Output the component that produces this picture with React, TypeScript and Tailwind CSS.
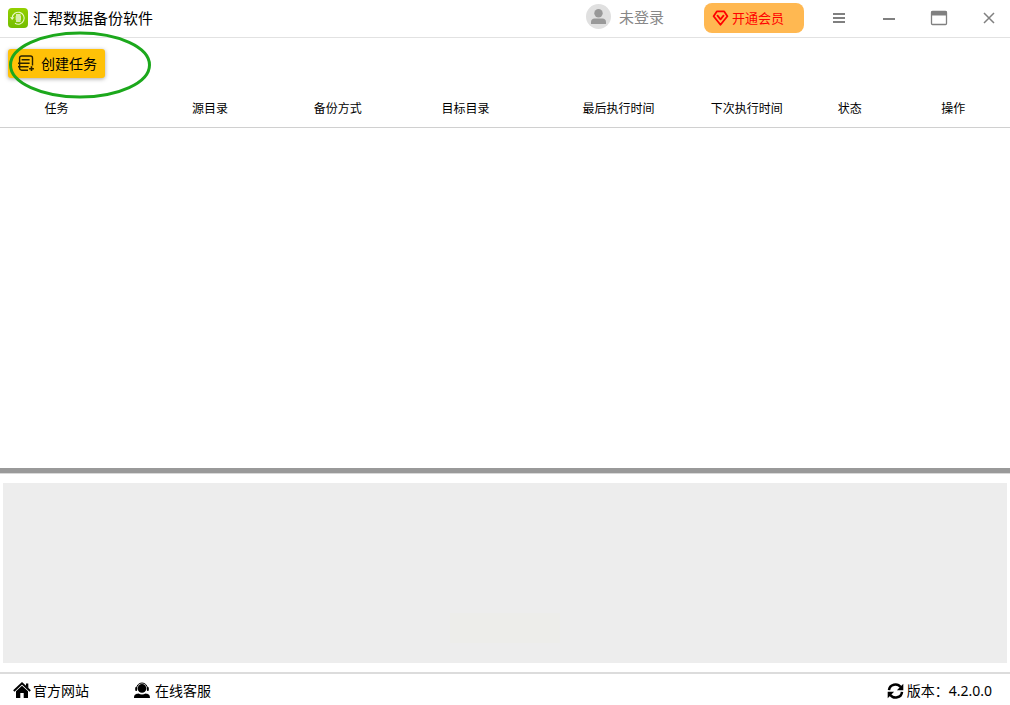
import type { ReactNode } from "react";

const columns = [
    {name: "任务", className: "w-[12%] pr-2"},
    {name: "源目录", className: "w-[17.6%]"},
    {name: "备份方式", className: "w-[7.7%]"},
    {name: "目标目录", className: "w-[17.6%]"},
    {name: "最后执行时间", className: "w-[12.7%]"},
    {name: "下次执行时间", className: "w-[12.7%]"},
    {name: "状态", className: "w-[7.7%]"},
    {name: "操作", className: "w-[12%] pl-2"},
];

function Logo() {
    return (
        <svg width="20" height="20" viewBox="0 0 20 20" fill="none" aria-hidden="true">
            <defs>
                <linearGradient id="logo" x1="0" y1="0" x2="0" y2="1">
                    <stop offset="0" stopColor="#93d000" />
                    <stop offset="1" stopColor="#72bd00" />
                </linearGradient>
            </defs>
            <rect width="20" height="20" rx="4" fill="url(#logo)" />
            <path d="M4.2 9.5A6 6 0 1 1 7 15.300" stroke="#e9f8c8" strokeWidth="1.1" />
            <path d="M2 9.300h4.400l-2.200 2.600z" fill="#e9f8c8" />
            <path d="M8 7h4.600M7.600 9h5.400M7.600 11h5.400M8 13h4.600" stroke="#f4fbe2" strokeWidth="1.300" />
        </svg>
    );
}

function AvatarIcon() {
    return (
        <svg width="26" height="26" viewBox="0 0 26 26" aria-hidden="true">
            <circle cx="12.5" cy="12.5" r="12.5" fill="#e0e0e0" />
            <circle cx="12.5" cy="9.2" r="4.2" fill="#999" />
            <path d="M5 20v-2.2c0-2 1.5-3.3 3.5-3.3h8c2 0 3.5 1.3 3.5 3.3V20z" fill="#999" />
        </svg>
    );
}

function DiamondIcon() {
    return (
        <svg width="17" height="16" viewBox="0 0 17 16" fill="none" stroke="#ff0000" strokeWidth="1.8" strokeLinejoin="round" aria-hidden="true">
            <path d="M4.8 1.4h7.4l3.2 4.8-6.9 8.600-6.900-8.600z" />
            <path d="M5.500 5.700l3 3.600 3-3.600" strokeLinecap="round" />
        </svg>
    );
}

function TaskIcon() {
    return (
        <svg width="17" height="17" viewBox="0 0 17 17" fill="none" stroke="#2b2200" strokeWidth="1.4" aria-hidden="true">
            <path d="M10 15.200H3.600a2 2 0 0 1-2-2V3a2 2 0 0 1 2-2h8.900a2 2 0 0 1 2 2v7.500" />
            <path d="M0 11.700h10.500M3.600 4.700h8M0 8.200h11.600" />
            <path d="M13.500 11.300v4.800M11.100 13.700h4.800" strokeWidth="1.6" />
        </svg>
    );
}

function HomeIcon() {
    return (
        <svg width="18" height="17" viewBox="0 0 18 17" aria-hidden="true">
            <path d="M13 1.500h2.300v4.800L13 4.200z" />
            <path d="M.8 9L9 1.400 17.200 9" fill="none" stroke="#000" strokeWidth="1.900" />
            <path d="M3 9.300l6-5.500 6 5.500V16h-4.300v-5H7.300v5H3z" />
        </svg>
    );
}

function SupportIcon() {
    return (
        <svg width="16" height="17" viewBox="0 0 16 17" aria-hidden="true">
            <path d="M2.500 6.500C3 -.8 13 -.8 13.500 6.500" fill="none" stroke="#000" strokeWidth="1" />
            <circle cx="8" cy="6.400" r="4.300" />
            <rect x="1.200" y="5" width="2" height="4" rx="1" />
            <rect x="12.800" y="5" width="2" height="4" rx="1" />
            <path d="M0 16c0-3.500 2-4.200 4.500-4.500 2 1.300 5 1.300 7 0C14 11.800 16 12.500 16 16z" />
        </svg>
    );
}

function RefreshIcon() {
    return (
        <svg width="17" height="16" viewBox="0 0 17 16" aria-hidden="true">
            <path d="M2 7.200C2.500 1 10.500-.3 13.600 4M15 8.800C14.500 15 6.500 16.300 3.400 12" fill="none" stroke="#000" strokeWidth="2.500" />
            <path d="M16.300.8v6.400H9.900zM.7 15.200V8.800h6.400z" />
        </svg>
    );
}

function WindowButton({label, children}: { label: string; children: ReactNode }) {
    return (
        <button type="button" aria-label={label} className="flex h-9 w-[50px] items-center justify-center last:w-[46px] last:pl-1 hover:bg-gray-100">
            <svg width="18" height="16" viewBox="0 0 18 16" fill="none" stroke="#808080" aria-hidden="true">
                {children}
            </svg>
        </button>
    );
}

export default function App() {
    return (
        <div className="flex min-h-screen flex-col bg-white font-['Noto_Sans','Noto_Sans_CJK_SC',sans-serif] text-black">
            <header className="flex h-[38px] items-center justify-between border-b border-[#e2e2e2] pb-px pl-2">
                <div className="flex items-center gap-[5px]">
                    <Logo />
                    <h1 className="text-[15px] leading-5">汇帮数据备份软件</h1>
                </div>
                <div className="flex items-center">
                    <button type="button" className="mr-10 flex items-center gap-[7px] pb-[2px] text-[15px] leading-5 text-[#888]">
                        <AvatarIcon />
                        未登录
                    </button>
                    <button type="button" className="mr-[10px] flex h-[30px] w-[100px] items-center gap-[3px] rounded-lg bg-[#ffb851] pl-2 text-[13px] leading-5 text-[#ff0000]">
                        <DiamondIcon />
                        开通会员
                    </button>
                    <WindowButton label="菜单">
                        <path d="M3 4h12M3 8h12M3 12h12" strokeWidth="2" />
                    </WindowButton>
                    <WindowButton label="最小化">
                        <path d="M3 9h12" strokeWidth="2" />
                    </WindowButton>
                    <WindowButton label="最大化">
                        <rect x="1.500" y="1.500" width="15" height="13" rx="1" strokeWidth="1.300" />
                        <path d="M1 3.500h16" strokeWidth="4" />
                    </WindowButton>
                    <WindowButton label="关闭">
                        <path d="M4 3l10 10M14 3L4 13" strokeWidth="1.500" />
                    </WindowButton>
                </div>
            </header>

            <main className="flex flex-1 flex-col">
                <div className="relative flex px-2 pt-[11px]">
                    <button type="button" className="flex h-[29px] items-center gap-[6px] rounded-[3px] bg-[#ffc107] pr-2 pl-[10px] text-[14px] leading-5 shadow-[0_1px_4px_rgba(0,0,0,0.35)]">
                        <TaskIcon />
                        创建任务
                    </button>
                    {/* hint ring around the create button */}
                    <svg className="pointer-events-none absolute -top-2 left-2" width="144" height="70" viewBox="0 0 144 70" fill="none" aria-hidden="true">
                        <ellipse cx="72" cy="35" rx="69.500" ry="32" stroke="#1ca81c" strokeWidth="3" />
                    </svg>
                </div>

                <table className="mt-[11px] w-full table-fixed border-collapse">
                    <thead>
                        <tr className="h-[38px] border-b border-[#d0d0d0]">
                            {columns.map((column) => (
                                <th
                                    key={column.name}
                                    scope="col"
                                    className={`${column.className} pt-[2px] text-center text-[12px] leading-4 font-normal whitespace-nowrap`}
                                >
                                    {column.name}
                                </th>
                            ))}
                        </tr>
                    </thead>
                    <tbody />
                </table>

                <div className="flex-1" />
                <div className="h-[6px] border-b border-[#d8d8d8] bg-[#999]" />
                <section aria-label="日志" className="mx-[3px] mt-[9px] mb-[9px] flex h-[180px] items-end justify-center bg-[#ededed] pb-5">
                    <div className="h-[30px] w-[110px] bg-[#ededea]" />
                </section>
            </main>

            <footer className="flex h-[33px] items-center justify-between border-t-2 border-[#dcdcdc] pt-[2px] pr-[18px] pl-[13px] text-[14px] leading-5">
                <nav className="flex items-center gap-[45px]">
                    <a href="#site" className="flex items-center gap-[2px]">
                        <HomeIcon />
                        官方网站
                    </a>
                    <a href="#support" className="flex items-center gap-[5px]">
                        <SupportIcon />
                        在线客服
                    </a>
                </nav>
                <button type="button" className="flex items-center gap-[3px]">
                    <RefreshIcon />
                    <span>版本：4.2.0.0</span>
                </button>
            </footer>
        </div>
    );
}
